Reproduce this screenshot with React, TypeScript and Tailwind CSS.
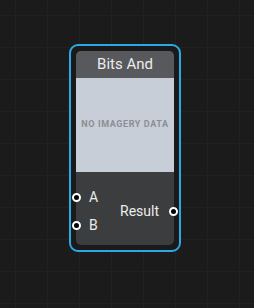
const Pin = ({ className = "" }: { className?: string }) => (
  <span
    className={`block shrink-0 w-[9px] h-[9px] rounded-full border-2 border-white bg-black ${className}`}
  />
)

const App = () => {
  return (
    <div
      className="w-[254px] h-[308px] overflow-hidden bg-[#1b1b1b] bg-[linear-gradient(to_right,#212121_1px,transparent_1px),linear-gradient(to_bottom,#212121_1px,transparent_1px)] bg-[size:32px_32px] bg-[position:15px_15px] pt-[44px] pl-[69px]"
      style={{ fontFamily: "Roboto, 'Noto Sans', sans-serif" }}
    >
      <div className="w-[112px] h-[208px] rounded-[9px] border-2 border-[#2aa9e4] bg-[#1a1a1a] p-[5px]">
        <div className="flex flex-col h-full rounded-[5px] bg-[#3c3d3f]">
          <div className="h-[27px] shrink-0 rounded-t-[5px] bg-[#58595c] flex items-center justify-center text-[15px] text-[#ececec]">
            Bits And
          </div>
          <div className="h-[94px] shrink-0 bg-[#c8ced7] flex items-center justify-center text-[9px] font-bold tracking-[0.6px] text-[#8a8e95]">
            NO IMAGERY DATA
          </div>
          <div className="flex-1 flex justify-between pt-[16px] text-[14px] leading-[18px] text-[#ececec]">
            <div className="flex flex-col gap-[10px]">
              <div className="flex items-center gap-[8px]">
                <Pin className="-ml-[4px]" />
                <span>A</span>
              </div>
              <div className="flex items-center gap-[8px]">
                <Pin className="-ml-[4px]" />
                <span>B</span>
              </div>
            </div>
            <div className="flex items-center gap-[10px] mt-[14px] h-[18px]">
              <span>Result</span>
              <Pin className="-mr-[4px]" />
            </div>
          </div>
        </div>
      </div>
    </div>
  )
}

export default App
